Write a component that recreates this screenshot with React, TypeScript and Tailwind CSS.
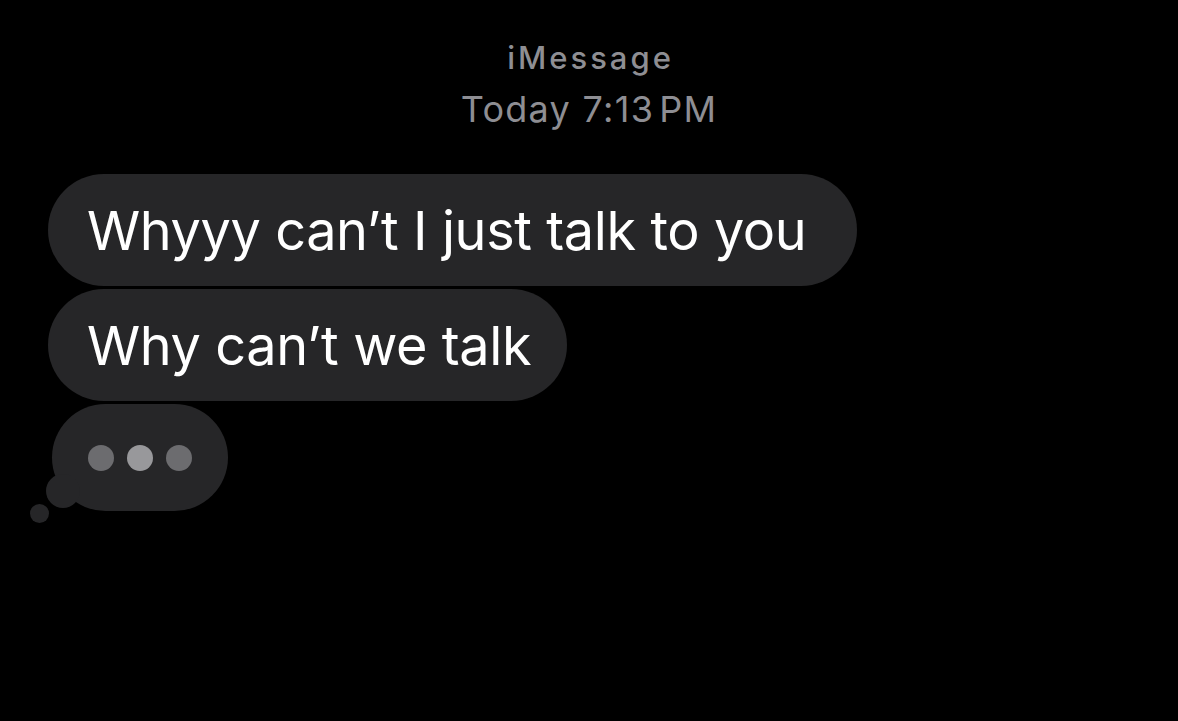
import React from "react";

export default function App() {
  return (
    <div className="w-[1178px] h-[721px] bg-black overflow-hidden" style={{ fontFamily: "Inter, 'Noto Sans', sans-serif" }}>
      <div className="flex flex-col items-center pt-[40px] text-[#8e8e93]">
        <div className="text-[31px] leading-[36px] font-medium tracking-[3px] pl-[3px]">iMessage</div>
        <div className="text-[36px] leading-[40px] mt-[13px] tracking-[1.3px]">
          <span>Today</span> <span>7:13</span><span className="ml-[5px]">PM</span>
        </div>
      </div>
      <div className="flex flex-col items-start pl-[48px] mt-[45px] gap-[3px]">
        <div className="h-[112px] rounded-[56px] bg-[#262628] flex items-center pl-[39px] pr-[51px] text-white text-[54px] tracking-[-0.4px]">
          Whyyy can’t I just talk to you
        </div>
        <div className="h-[112px] rounded-[56px] bg-[#262628] flex items-center pl-[39px] pr-[36px] text-white text-[54px] tracking-[-0.4px]">
          Why can’t we talk
        </div>
        <div className="relative ml-[4px] w-[176px] h-[107px] rounded-[54px] bg-[#262628] flex items-center justify-center gap-[13px]">
          <div className="absolute left-[-6px] top-[70px] w-[34px] h-[34px] rounded-full bg-[#262628]" />
          <div className="absolute left-[-22px] top-[100px] w-[19px] h-[19px] rounded-full bg-[#262628]" />
          <div className="w-[26px] h-[26px] rounded-full bg-[#6c6c6f]" />
          <div className="w-[26px] h-[26px] rounded-full bg-[#98989b]" />
          <div className="w-[26px] h-[26px] rounded-full bg-[#6c6c6f]" />
        </div>
      </div>
    </div>
  );
}
